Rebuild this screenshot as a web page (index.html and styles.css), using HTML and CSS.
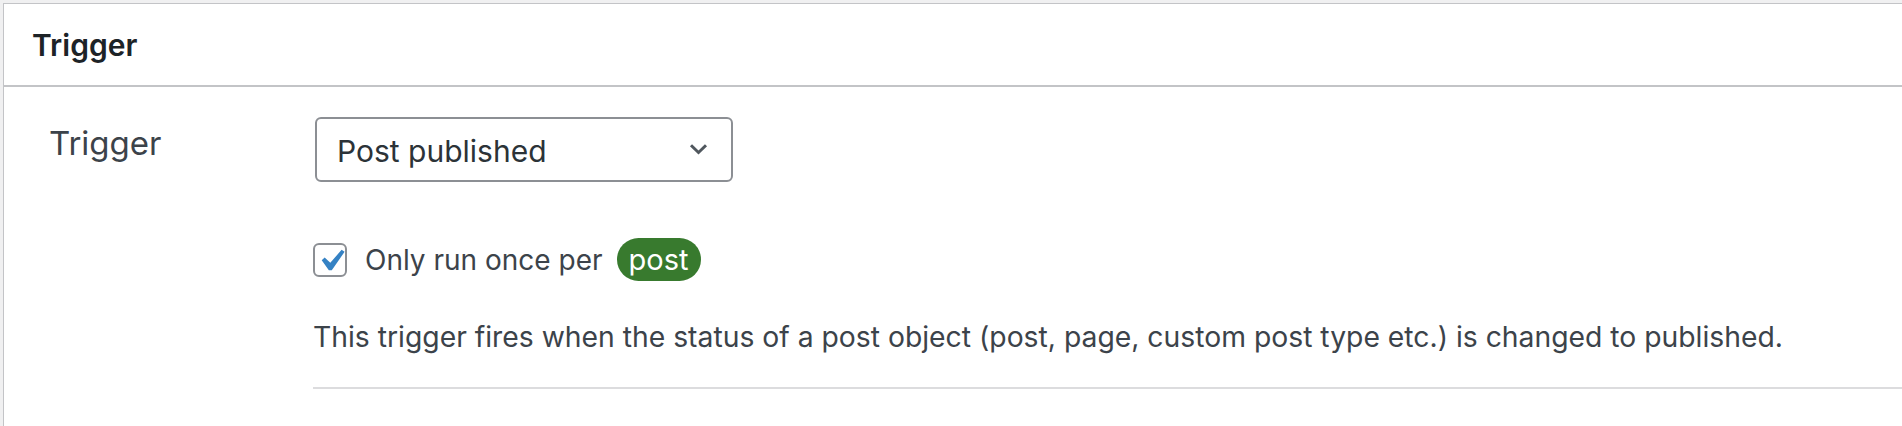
FILE: index.html
```html
<!DOCTYPE html>
<html lang="en">
<head>
<meta charset="utf-8">
<title>Trigger</title>
<link rel="stylesheet" href="styles.css">
</head>
<body>
<div class="panel">
  <div class="panel-head"><h2 class="panel-title">Trigger</h2></div>
  <div class="panel-body">
    <div class="row">
      <div class="row-label">Trigger</div>
      <div class="row-field">
        <div class="select">
          <span class="select-value">Post published</span>
          <svg class="select-arrow" viewBox="0 0 19 12" width="19" height="12" aria-hidden="true"><path d="M2 2.2l7.5 7.3 7.5-7.3" fill="none" stroke="#50575e" stroke-width="3"/></svg>
        </div>
        <div class="check-row">
          <span class="checkbox"><svg class="check" viewBox="0 0 20 20" aria-hidden="true"><path d="M14.83 4.89l1.34.94-5.81 8.38H9.02L5.78 9.67l1.34-1.25 2.57 2.4z" fill="#3582c4"/></svg></span>
          <span class="check-label">Only run once per</span>
          <span class="badge">post</span>
        </div>
        <p class="desc">This trigger fires when the status of a post object (post, page, custom post type etc.) is changed to published.</p>
        <div class="sep"></div>
      </div>
    </div>
  </div>
</div>
</body>
</html>
```
FILE: styles.css
```css
html, body {
  margin: 0;
  height: 100%;
}
body {
  background: #f0f0f1;
  padding: 3px 0 0 3px;
  box-sizing: border-box;
  font-family: Inter, "Liberation Sans", sans-serif;
  color: #3c434a;
  overflow: hidden;
}
.panel {
  background: #fff;
  border-top: 1px solid #c3c4c7;
  border-left: 1px solid #c3c4c7;
  height: 100%;
  box-sizing: border-box;
}
.panel-head {
  height: 81px;
  border-bottom: 2px solid #c3c4c7;
  display: flex;
  align-items: center;
  padding-left: 28px;
}
.panel-title {
  margin: 0;
  font-size: 30px;
  font-weight: 600;
  color: #1d2327;
  line-height: 1;
}
.panel-body {
  padding-top: 30px;
}
.row {
  display: grid;
  grid-template-columns: 264px 1fr;
  padding-left: 45px;
}
.row-label {
  font-size: 33px;
  line-height: 40px;
  padding-top: 6px;
  color: #3c434a;
}
.row-field {
  display: flex;
  flex-direction: column;
  align-items: flex-start;
}
.select {
  margin-left: 2px;
  width: 418px;
  height: 65px;
  box-sizing: border-box;
  border: 2px solid #8c8f94;
  border-radius: 6px;
  display: flex;
  align-items: center;
  justify-content: space-between;
  padding: 0 23px 0 20px;
  font-size: 30px;
  color: #2c3338;
}
.select-value {
  padding-top: 2px;
}
.select-arrow {
  display: block;
  margin-top: -2px;
}
.check-row {
  margin-top: 56px;
  height: 43px;
  display: flex;
  align-items: center;
  font-size: 28px;
}
.checkbox {
  width: 34px;
  height: 34px;
  box-sizing: border-box;
  border: 2px solid #8c8f94;
  border-radius: 6px;
  position: relative;
  flex: none;
}
.check {
  position: absolute;
  left: -6px;
  top: -6px;
  width: 44px;
  height: 44px;
}
.check-label {
  margin-left: 18px;
  color: #3c434a;
}
.badge {
  margin-left: 14px;
  height: 43px;
  box-sizing: border-box;
  padding: 0 12px;
  border-radius: 22px;
  background: #387a2e;
  color: #fff;
  display: flex;
  align-items: center;
  font-size: 29px;
}
.desc {
  margin: 36px 0 0;
  font-size: 28.3px;
  line-height: 40px;
  color: #3c434a;
}
.sep {
  margin-top: 30px;
  align-self: stretch;
  height: 2px;
  background: #dcdcde;
}
```
